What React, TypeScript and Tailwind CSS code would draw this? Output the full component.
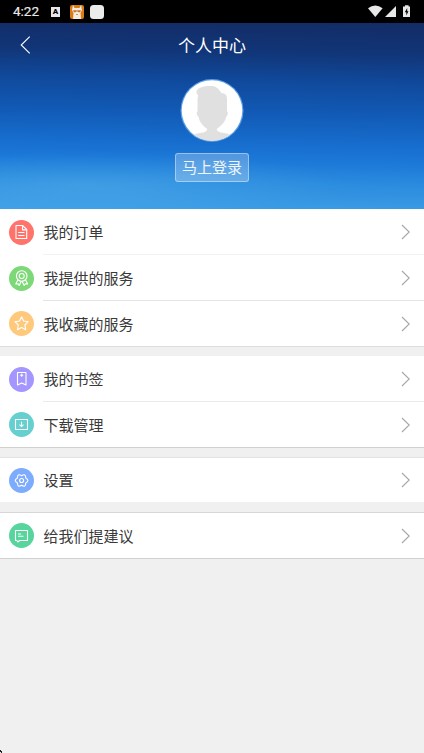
import type { ReactNode } from 'react'
import clsx from 'clsx'

type Item = {
  label: string
  color: string
  height: string
  divider?: string
  icon: ReactNode
}

type Group = {
  className: string
  items: Item[]
}

const groups: Group[] = [
  {
    className: 'border-b border-[#dedede]',
    items: [
      {
        label: '我的订单',
        color: 'bg-[#ff736b]',
        height: 'h-[46px]',
        divider: 'border-b border-[#f2f2f2]',
        icon: (
          <>
            <path d="M7 5.500h6.500l4.200 4v9H7z" />
            <path d="M13.500 5.700v4.200h4.200M9.200 12.500h6.300M9.200 15.500h6.300" />
          </>
        ),
      },
      {
        label: '我提供的服务',
        color: 'bg-[#7dd877]',
        height: 'h-[46px]',
        divider: 'border-b border-[#e4e4e4]',
        icon: (
          <>
            <circle cx="12.700" cy="10" r="5.300" />
            <circle cx="12.700" cy="10" r="2.500" />
            <path d="M8.800 13.900l-2 4.100 2.300-.3 1.100 1.800 2.100-4.200M16.600 13.900l2 4.100-2.300-.3-1.100 1.800-2.100-4.200" />
          </>
        ),
      },
      {
        label: '我收藏的服务',
        color: 'bg-[#ffc97c]',
        height: 'h-[45px]',
        icon: (
          <path d="M12.600 5.800l2 4.200 4.700.7-3.400 3.300.8 4.700-4.100-2.200-4.100 2.200.8-4.700-3.400-3.300 4.700-.7z" />
        ),
      },
    ],
  },
  {
    className: 'mt-[9px] border-b border-[#d0d0d0]',
    items: [
      {
        label: '我的书签',
        color: 'bg-[#a496ff]',
        height: 'h-[46px]',
        divider: 'border-b border-[#ebebeb]',
        icon: (
          <>
            <path d="M8.500 5.500h8.500v12.500l-4.250-2L8.500 18z" />
            <path d="M12.700 6.800v3M11.200 8.300h3" />
          </>
        ),
      },
      {
        label: '下载管理',
        color: 'bg-[#66d0d0]',
        height: 'h-[45px]',
        icon: (
          <>
            <path d="M6.500 7.500h12v10h-12z" />
            <path d="M12.500 9.700v5M10.500 12.700l2 2 2-2" />
          </>
        ),
      },
    ],
  },
  {
    className: 'mt-[9px] border-t border-[#e3e3e3]',
    items: [
      {
        label: '设置',
        color: 'bg-[#7dacff]',
        height: 'h-[44px]',
        icon: (
          <>
            <path d="M16.760 10.100Q21.100 12.500 16.760 14.900 16.850 19.860 12.600 17.300 8.350 19.860 8.440 14.900 4.100 12.500 8.440 10.100 8.350 5.140 12.600 7.700 16.850 5.140 16.760 10.100z" />
            <circle cx="12.600" cy="12.500" r="2" />
          </>
        ),
      },
    ],
  },
  {
    className: 'mt-[10px] border-y border-t-[#d7d7d7] border-b-[#d0d0d0]',
    items: [
      {
        label: '给我们提建议',
        color: 'bg-[#57d59d]',
        height: 'h-[45px]',
        icon: (
          <>
            <path d="M6.500 7.500h12v10h-8l-1.500 1.500-1.200-1.500H6.500z" />
            <path d="M9 11h3M9 13.200h5.500" />
          </>
        ),
      },
    ],
  },
]

function StatusBar() {
  return (
    <div className="flex h-[23px] items-center justify-between bg-black px-[13px] text-[#e8e8e8]">
      <div className="flex items-center">
        <span className="w-[38px] font-[Roboto] text-[13.5px] leading-[23px] [-webkit-text-stroke:0.2px_#e8e8e8]">
          4:22
        </span>
        <span className="flex h-[10px] w-[9px] items-center justify-center bg-[#e8e8e8] font-[Roboto] text-[8px] font-black leading-none text-black">
          A
        </span>
        <svg className="ml-[10px]" width="14" height="14" viewBox="0 0 14 14">
          <rect width="14" height="14" rx="2" fill="#db7b12" />
          <path d="M3 0l1.500 3h5L11 0l1 5-1.500 3 .5 6H3l.5-6L2 5z" fill="#f3ece4" />
          <path d="M3.300 5.200h3l.7.6.7-.6h3v1.200l-1.600 1-1.400-.8h-1.400l-1.400.8-1.600-1z" fill="#c8701c" />
          <path d="M6 9.500h2" stroke="#db7b12" strokeWidth=".8" />
        </svg>
        <span className="ml-[6px] size-[14px] rounded-[3.5px] bg-[#ebebeb]" />
      </div>
      <svg width="43" height="13" viewBox="0 0 43 13" fill="#e8e8e8">
        <path d="M0 3.300Q7.300-2.200 14.600 3.300L7.300 12z" />
        <path d="M28 1v11H17z" />
        <path d="M37 1.400V.3h3.600v1.100H42V12h-7V1.400z" />
        <path d="M39.200 3l-2.400 4.200h1.500v3.400l2.200-4.400h-1.300z" fill="#000" />
      </svg>
    </div>
  )
}

function Avatar() {
  return (
    <svg width="64" height="64" viewBox="0 0 64 64">
      <defs>
        <clipPath id="avatar">
          <circle cx="32" cy="32.500" r="30.300" />
        </clipPath>
      </defs>
      <circle cx="32" cy="32.500" r="31.500" fill="#5d9fe2" />
      <circle cx="32" cy="32.500" r="30.300" fill="#fff" />
      <path
        clipPath="url(#avatar)"
        fill="#e0e0e0"
        d="M17 12C20 8.500 27 7.400 32 8.100c5 .7 7 3.300 9.300 6.900C46 15.200 47 17.900 47 20.700v12.500c1.500 1 .8 4.500-.8 5.500-1 5-4.200 8.500-9.200 12-.8 2.500 2.500 3.500 7 4.300 4 .7 7 1.700 9 3.200v8H11v-8c2-1.500 5-2.500 9-3.200 4.500-.8 7.800-1.800 7-4.300-5-3.500-7.500-7-8.500-12-1.700-1-2.500-4.500-1-5.500V21.500c0-2 .8-3.500.5-4.500-1.500-.8-2-3.200-1-5z"
      />
    </svg>
  )
}

function Header() {
  return (
    <header className="flex h-[186px] flex-col items-center bg-[radial-gradient(ellipse_260px_34px_at_90px_163px,rgba(95,185,238,0.35),transparent),linear-gradient(181deg,#132c66_0%,#113577_16%,#104a9d_32%,#1159b4_47%,#166aca_61%,#1c79d8_73%,#2b8bde_84%,#3797e3_94%,#3c9fe8_100%)] text-white">
      <div className="flex h-[44px] w-full items-center">
        <button className="flex w-[50px] items-center pl-[20px]">
          <svg width="11" height="18" viewBox="0 0 11 18" fill="none" stroke="#fff" strokeWidth="1.1">
            <path d="M9.700.700L1.200 9l8.500 8.300" />
          </svg>
        </button>
        <h1 className="flex-1 pr-[50px] pb-px text-center text-[17px] leading-6">个人中心</h1>
      </div>
      <div className="mt-[11px]">
        <Avatar />
      </div>
      <button className="mt-[11px] h-[29px] w-[74px] rounded-[3px] border border-white/40 bg-white/25 pb-[2px] text-[15px] leading-[25px] text-white/90">
        马上登录
      </button>
    </header>
  )
}

function Row({ item }: { item: Item }) {
  return (
    <li className={clsx('flex items-center pl-[9px]', item.height)}>
      <span className={clsx('size-[25px] shrink-0 rounded-full', item.color)}>
        <svg
          width="25"
          height="25"
          viewBox="0 0 25 25"
          fill="none"
          stroke="#fff"
          strokeWidth="1.1"
          strokeLinejoin="round"
        >
          {item.icon}
        </svg>
      </span>
      <div
        className={clsx(
          'ml-[9px] flex h-full flex-1 items-center justify-between pr-[13px]',
          item.divider,
        )}
      >
        <span className="pl-[0.5px] text-[15px] leading-6">{item.label}</span>
        <svg width="10" height="16" viewBox="0 0 10 16" fill="none" stroke="#a6a6a6" strokeWidth="1.1">
          <path d="M1 1l7.200 7L1 15" />
        </svg>
      </div>
    </li>
  )
}

export default function App() {
  return (
    <div className="flex h-[753px] w-full flex-col overflow-hidden bg-[#f0f0f0] font-['Noto_Sans_CJK_SC',sans-serif] text-[#3a3a3a]">
      <StatusBar />
      <Header />
      <main className="flex-1">
        {groups.map((group, i) => (
          <ul key={i} className={clsx('bg-white', group.className)}>
            {group.items.map((item) => (
              <Row key={item.label} item={item} />
            ))}
          </ul>
        ))}
      </main>
      <svg width="3" height="3" viewBox="0 0 3 3">
        <path d="M0 0h1v1h1v2H1V2H0z" fill="#222" />
      </svg>
    </div>
  )
}
